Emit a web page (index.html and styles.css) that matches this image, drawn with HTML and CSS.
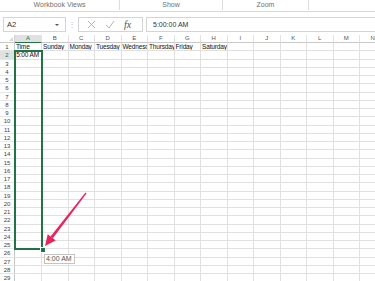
FILE: index.html
```html
<!DOCTYPE html>
<html lang="en">

<head>
    <meta charset="UTF-8">
    <meta name="viewport" content="width=device-width, initial-scale=1.0">
    <title>Workbook</title>
    <link rel="stylesheet" href="styles.css">
</head>

<body>
    <div class="ribbon">
        <div class="group group-views">Workbook Views</div>
        <div class="group group-show">Show</div>
        <div class="group group-zoom">Zoom</div>
        <div class="group group-rest"></div>
    </div>

    <div class="formula-bar">
        <div class="name-box">
            <span>A2</span>
            <span class="drop"></span>
        </div>
        <div class="grip">⋮</div>
        <div class="fx-box">
            <svg width="9" height="9" viewBox="0 0 9 9">
                <path d="M1 1 L8 8 M8 1 L1 8" stroke="#b4b4b4" stroke-width="1" fill="none" />
            </svg>
            <svg width="10" height="9" viewBox="0 0 10 9">
                <path d="M1 5 L4 8 L9 1" stroke="#b4b4b4" stroke-width="1" fill="none" />
            </svg>
            <span class="fx">fx</span>
        </div>
        <div class="formula-input">5:00:00 AM</div>
    </div>

    <div class="sheet-wrap">
        <div class="sheet" id="sheet"></div>

        <div class="selection"></div>
        <div class="fill-handle"></div>

        <svg class="arrow" width="52" height="64" viewBox="0 0 52 64">
            <polygon points="12.9,50.2 10.5,48.4 45.5,4.6 46.5,5.4" fill="#e8265e" />
            <polygon points="5,58 15.7,52.4 11.7,49.3 7.7,46.2" fill="#e8265e" />
        </svg>

        <div class="tip">4:00 AM</div>
    </div>

    <script>
        // build the grid: 14 columns (A-N), 29 rows
        const sheet = document.getElementById("sheet");
        const letters = "ABCDEFGHIJKLMN".split("");
        const data = {
            1: ["Time", "Sunday", "Monday", "Tuesday", "Wednesday", "Thursday", "Friday", "Saturday"],
            2: ["5:00 AM"]
        };

        let html = '<div class="corner"><span class="corner-mark"></span></div>';
        letters.forEach((l, i) => {
            html += `<div class="col-head${i === 0 ? " active" : ""}">${l}</div>`;
        });

        for (let r = 1; r <= 29; r++) {
            html += `<div class="row-head${r === 2 ? " active" : ""}">${r}</div>`;
            letters.forEach((l, i) => {
                const value = (data[r] && data[r][i]) || "";
                const cls = r === 2 && i === 0 ? "cell time" : "cell";
                html += `<div class="${cls}">${value}</div>`;
            });
        }

        sheet.innerHTML = html;
    </script>
</body>

</html>
```

FILE: styles.css
```css
body {
    font-family: "Liberation Sans", Arial, sans-serif;
    background: #fff;
    margin: 0;
    padding: 0;
    width: 375px;
    height: 281px;
    overflow: hidden;
}

/* ribbon group labels */
.ribbon {
    display: flex;
    height: 11px;
    border-bottom: 1px solid #d8d8d8;
}

.group {
    font-size: 7px;
    line-height: 10px;
    color: #6f6f6f;
    text-align: center;
    border-right: 1px solid #dcdcdc;
    height: 10px;
}

.group-views {
    width: 119px;
}

.group-show {
    width: 102px;
}

.group-zoom {
    width: 85px;
}

.group-rest {
    flex: 1;
    border-right: none;
}

/* formula bar */
.formula-bar {
    display: flex;
    align-items: center;
    height: 15px;
    padding-top: 5px;
    padding-bottom: 3px;
}

.name-box {
    display: flex;
    align-items: center;
    justify-content: space-between;
    box-sizing: border-box;
    width: 63px;
    height: 15px;
    margin-left: 3px;
    padding: 0 6px 0 3px;
    border: 1px solid #d4d4d4;
    font-size: 7.5px;
    color: #333;
}

.drop {
    width: 0;
    height: 0;
    border-left: 2px solid transparent;
    border-right: 2px solid transparent;
    border-top: 2px solid #555;
}

.grip {
    width: 12px;
    text-align: center;
    color: #c0c0c0;
    font-size: 8px;
}

.fx-box {
    display: flex;
    align-items: center;
    gap: 9px;
    box-sizing: border-box;
    width: 65px;
    height: 15px;
    padding-left: 8px;
    border: 1px solid #d4d4d4;
}

.fx {
    font-family: "Liberation Serif", serif;
    font-style: italic;
    font-size: 10px;
    color: #505050;
}

.formula-input {
    flex: 1;
    box-sizing: border-box;
    height: 15px;
    margin-left: 3px;
    padding-left: 6px;
    border: 1px solid #d4d4d4;
    border-right: none;
    font-size: 7px;
    line-height: 13px;
    color: #333;
}

/* worksheet */
.sheet-wrap {
    position: relative;
}

.sheet {
    display: grid;
    grid-template-columns: 15px 27px repeat(13, 26.5px);
    grid-template-rows: 8px;
    grid-auto-rows: 8.25px;
}

.corner,
.col-head,
.row-head,
.cell {
    box-sizing: border-box;
    overflow: hidden;
    white-space: nowrap;
}

.corner {
    display: flex;
    align-items: flex-end;
    justify-content: flex-end;
    padding: 0 1px 1px 0;
    border-right: 1px solid #d0d0d0;
    border-bottom: 1px solid #c8c8c8;
}

.corner-mark {
    width: 0;
    height: 0;
    border-left: 4px solid transparent;
    border-bottom: 4px solid #d8d8d8;
}

.col-head {
    font-size: 6px;
    line-height: 7px;
    color: #555;
    text-align: center;
    border-right: 1px solid #e2e2e2;
    border-bottom: 1px solid #c8c8c8;
}

.col-head.active {
    background: #e1e1e1;
    color: #217346;
    border-bottom: 1px solid #217346;
}

.row-head {
    font-size: 6px;
    line-height: 8px;
    color: #444;
    text-align: center;
    border-right: 1px solid #c8c8c8;
    border-bottom: 1px solid #e6e6e6;
}

.row-head.active {
    background: #e1e1e1;
    color: #217346;
}

.cell {
    font-size: 6.5px;
    letter-spacing: -0.15px;
    line-height: 8px;
    color: #111;
    padding-left: 1px;
    border-right: 1px solid #e0e0e0;
    border-bottom: 1px solid #e0e0e0;
}

.cell.time {
    text-align: right;
    padding-right: 2px;
}

/* selection and overlays */
.selection {
    position: absolute;
    left: 14px;
    top: 15px;
    width: 29px;
    height: 200px;
    box-sizing: border-box;
    border: 2px solid #217346;
}

.fill-handle {
    position: absolute;
    left: 40px;
    top: 212px;
    width: 4px;
    height: 4px;
    background: #217346;
    border: 1px solid #fff;
}

.arrow {
    position: absolute;
    left: 40px;
    top: 153px;
}

.tip {
    position: absolute;
    left: 44px;
    top: 219px;
    width: 31px;
    height: 10px;
    box-sizing: border-box;
    border: 1px solid #c4c4c4;
    background: #fff;
    font-size: 7px;
    line-height: 8px;
    color: #555;
    padding-left: 1px;
}
```
